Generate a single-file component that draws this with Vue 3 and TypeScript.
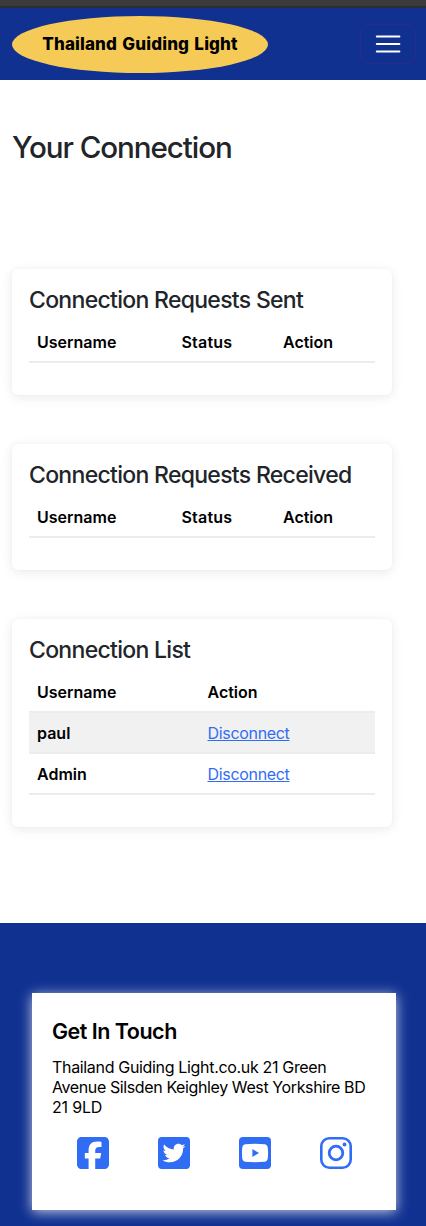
<script setup lang="ts">
interface Connection {
  name: string
}

const requestSections: string[] = ['Connection Requests Sent', 'Connection Requests Received']
const connections: Connection[] = [{ name: 'paul' }, { name: 'Admin' }]
</script>

<template>
  <div class="page">
    <div class="strip"></div>
    <header class="navbar">
      <div class="logo"><span>Thailand Guiding Light</span></div>
      <button class="toggler" aria-label="Menu">
        <svg width="30" height="30" viewBox="0 0 30 30">
          <path d="M3.8 7.5h22.6M3.8 15h22.6M3.8 22.5h22.6" stroke="#fff" stroke-width="2" stroke-linecap="round" />
        </svg>
      </button>
    </header>

    <main class="main">
      <h1>Your Connection</h1>
      <section v-for="title in requestSections" :key="title" class="card">
        <h2>{{ title }}</h2>
        <div class="row three">
          <b>Username</b><b class="status">Status</b><b>Action</b>
        </div>
      </section>
      <section class="card">
        <h2>Connection List</h2>
        <div class="row two">
          <b>Username</b><b>Action</b>
        </div>
        <div v-for="(c, i) in connections" :key="c.name" class="row two" :class="{ striped: i % 2 === 0 }">
          <b>{{ c.name }}</b><span><a href="#">Disconnect</a></span>
        </div>
      </section>
    </main>

    <footer class="footer">
      <div class="contact">
        <h3>Get In Touch</h3>
        <p>
          <span class="l1">Thailand Guiding Light.co.uk 21 Green</span><br />
          <span class="l2">Avenue Silsden Keighley West Yorkshire BD</span><br />
          <span class="l3">21 9LD</span>
        </p>
        <div class="social">
          <svg viewBox="0 32 448 448"><path d="M64 32C28.7 32 0 60.7 0 96V416c0 35.3 28.7 64 64 64h98.2V334.2H109.4V256h52.8V222.3c0-87.1 39.4-127.5 125-127.5c16.2 0 44.2 3.2 55.7 6.4V172c-6-.6-16.5-1-29.6-1c-42 0-58.2 15.9-58.2 57.2V256h83.6l-14.4 78.2H255V480H384c35.3 0 64-28.7 64-64V96c0-35.3-28.7-64-64-64H64z" /></svg>
          <svg viewBox="0 32 448 448"><path d="M400 32H48C21.5 32 0 53.5 0 80v352c0 26.5 21.5 48 48 48h352c26.5 0 48-21.5 48-48V80c0-26.5-21.5-48-48-48zm-48.9 158.8c.2 2.8.2 5.7.2 8.5 0 86.7-66 186.6-186.6 186.6-37.2 0-71.7-10.8-100.7-29.4 5.3.6 10.4.8 15.8.8 30.7 0 58.9-10.4 81.4-28-28.8-.6-53-19.5-61.3-45.5 10.1 1.5 19.2 1.5 29.6-1.2-30-6.1-52.5-32.5-52.5-64.4v-.8c8.7 4.9 18.9 7.9 29.6 8.3a65.447 65.447 0 0 1-29.2-54.6c0-12.2 3.2-23.4 8.9-33.1 32.3 39.8 80.8 65.8 135.2 68.6-9.3-44.5 24-80.6 64-80.6 18.9 0 35.9 7.9 47.9 20.7 14.8-2.8 29-8.3 41.6-15.8-4.9 15.2-15.2 28-28.8 36.1 13.2-1.4 26-5.1 37.8-10.2-8.9 13.1-20.1 24.7-32.9 34z" /></svg>
          <svg viewBox="0 0 32 32">
            <rect width="32" height="32" rx="4" />
            <path fill="#fff" d="M6.5 7.2Q16 6.4 25.5 7.2Q28.3 7.5 28.7 10.5Q29.4 16 28.7 21.5Q28.3 24.5 25.5 24.8Q16 25.6 6.5 24.8Q3.7 24.5 3.3 21.5Q2.6 16 3.3 10.5Q3.7 7.5 6.5 7.2z" />
            <path d="M13.4 12.1 20 16l-6.6 3.9z" />
          </svg>
          <svg viewBox="0 0 32 32">
            <rect x="1.3" y="1.3" width="29.4" height="29.4" rx="8" fill="none" stroke="#316df4" stroke-width="2.6" />
            <circle cx="16" cy="16" r="6.8" fill="none" stroke="#316df4" stroke-width="2.8" />
            <circle cx="24.5" cy="7.5" r="1.9" />
          </svg>
        </div>
      </div>
    </footer>
  </div>
</template>

<style>
body {
  background: #fff;
}
</style>

<style scoped>
* {
  box-sizing: border-box;
}
.page {
  height: 1226px;
  overflow: hidden;
  display: flex;
  flex-direction: column;
  font: 400 16px/24px Inter, 'Liberation Sans', sans-serif;
  color: #212529;
}
.strip {
  height: 8px;
  flex: none;
  background: #3b3b3b;
  border-bottom: 2px solid #2d2e30;
}
.navbar {
  height: 72.4px;
  flex: none;
  background: #113191;
  display: flex;
  align-items: center;
  justify-content: space-between;
  padding: 0 10px 0 12px;
}
.logo {
  width: 256px;
  height: 57px;
  border-radius: 50%;
  background: #f6ca57;
  display: flex;
  align-items: center;
  justify-content: center;
  color: #000;
  font-weight: 800;
  font-size: 17px;
  letter-spacing: 0.15px;
  word-spacing: 1.4px;
  white-space: nowrap;
}
.toggler {
  width: 56px;
  height: 40px;
  padding: 0;
  border: 1px solid #282b8b;
  border-radius: 6px;
  background: none;
  display: flex;
  align-items: center;
  justify-content: center;
}
.toggler svg {
  display: block;
}
.main {
  height: 843px;
  flex: none;
  padding: 49px 34px 0 12px;
}
h1 {
  margin: 0 0 103.6px;
  font-size: 29.6px;
  line-height: 36px;
  font-weight: 500;
  letter-spacing: -1.08px;
  white-space: nowrap;
}
.card {
  height: 126px;
  border-radius: 6px;
  padding: 17px 17px 0;
  margin-bottom: 49px;
  box-shadow: 0 2px 12px rgba(0, 0, 0, 0.09), 0 0 1px rgba(0, 0, 0, 0.08);
}
.card:last-child {
  height: 208px;
}
h2 {
  margin: 0 0 8px;
  font-size: 23px;
  line-height: 28px;
  font-weight: 500;
  letter-spacing: -0.7px;
  white-space: nowrap;
}
.row {
  display: grid;
  height: 41px;
  align-items: center;
  color: #000;
  border-bottom: 2px solid #ebecee;
  padding: 2px 0 0 8px;
}
.row b {
  font-weight: 600;
}
.row .status {
  letter-spacing: 0.2px;
}
.three {
  grid-template-columns: 144.5px 101.5px 1fr;
}
.two {
  grid-template-columns: 170.5px 1fr;
}
.striped {
  background: #f1f1f1;
}
a {
  color: #316df4;
  letter-spacing: -0.32px;
  text-decoration: underline;
}
.footer {
  flex: 1;
  background: #113191;
  padding: 70px 30px 0 32px;
}
.contact {
  height: 217px;
  background: #fff;
  box-shadow: 0 2px 12px rgba(255, 255, 255, 0.75);
  padding: 24px 20px;
  color: #000;
}
h3 {
  margin: 0 0 12px;
  font-size: 21.5px;
  line-height: 28px;
  font-weight: 600;
  letter-spacing: -0.5px;
}
p {
  margin: 0 0 20px;
  line-height: 20px;
  white-space: nowrap;
}
.l1 {
  letter-spacing: -0.33px;
}
.l2 {
  letter-spacing: -0.39px;
}
.l3 {
  letter-spacing: -0.2px;
}
.social {
  display: grid;
  grid-template-columns: repeat(4, 1fr);
  justify-items: center;
}
.social svg {
  width: 32px;
  height: 32px;
  fill: #316df4;
}
</style>
